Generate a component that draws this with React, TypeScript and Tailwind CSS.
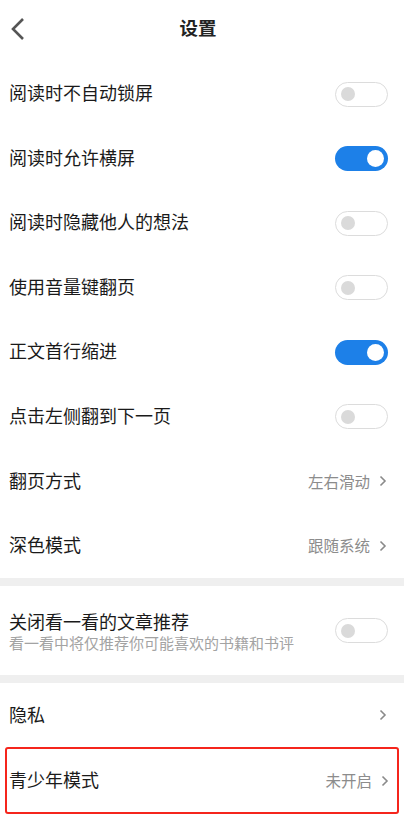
import clsx from "clsx";

const font = "font-['Noto_Sans_CJK_SC','Noto_Sans',sans-serif]";

function Toggle({ on }: { on: boolean }) {
  return (
    <div
      className={clsx(
        "flex h-[25px] w-[53px] shrink-0 items-center rounded-full px-[4px]",
        on
          ? "justify-end bg-[#1d80e8]"
          : "justify-start border-[1.5px] border-[#dcdcdc] bg-white px-[5px]"
      )}
    >
      <div
        className={clsx(
          "rounded-full",
          on ? "h-[17px] w-[17px] bg-white" : "h-[14px] w-[14px] bg-[#dadada]"
        )}
      />
    </div>
  );
}

function Chevron() {
  return (
    <svg width="8" height="12" viewBox="0 0 8 12" className="ml-[9px]">
      <path
        d="M1.5 1.5 L6 6 L1.5 10.5"
        fill="none"
        stroke="#8a8a8a"
        strokeWidth="1.6"
      />
    </svg>
  );
}

function ToggleRow({ label, on }: { label: string; on: boolean }) {
  return (
    <div className="flex h-[64.5px] items-center justify-between pl-[9px] pr-[16px]">
      <span className="mb-[3px] text-[18px] text-[#1a1a1a]">{label}</span>
      <Toggle on={on} />
    </div>
  );
}

function LinkRow({ label, value }: { label: string; value?: string }) {
  return (
    <div className="flex h-[64.5px] items-center justify-between pl-[9px] pr-[17px]">
      <span className="mb-[2px] text-[18px] text-[#1a1a1a]">{label}</span>
      <div className="flex items-center">
        {value && (
          <span className="text-[15.5px] text-[#8c8c8c]">{value}</span>
        )}
        <Chevron />
      </div>
    </div>
  );
}

export default function App() {
  return (
    <div className={clsx("h-[821px] w-[404px] overflow-hidden bg-white", font)}>
      <header className="relative flex h-[62px] items-center justify-center pr-[8px]">
        <svg
          width="16"
          height="24"
          viewBox="0 0 16 24"
          className="absolute left-[10px] top-[17px]"
        >
          <path
            d="M13 2 L3 12 L13 22"
            fill="none"
            stroke="#555"
            strokeWidth="2.6"
          />
        </svg>
        <h1 className="mb-[6px] text-[18.5px] font-bold text-[#222]">设置</h1>
      </header>

      <ToggleRow label="阅读时不自动锁屏" on={false} />
      <ToggleRow label="阅读时允许横屏" on />
      <ToggleRow label="阅读时隐藏他人的想法" on={false} />
      <ToggleRow label="使用音量键翻页" on={false} />
      <ToggleRow label="正文首行缩进" on />
      <ToggleRow label="点击左侧翻到下一页" on={false} />
      <LinkRow label="翻页方式" value="左右滑动" />
      <LinkRow label="深色模式" value="跟随系统" />

      <div className="h-[8px] bg-[#efefef]" />

      <div className="flex h-[89px] items-center justify-between pl-[9px] pr-[16px]">
        <div className="flex flex-col">
          <span className="text-[18px] leading-[24px] text-[#1a1a1a]">
            关闭看一看的文章推荐
          </span>
          <span className="text-[15px] leading-[20px] text-[#a3a3a3]">
            看一看中将仅推荐你可能喜欢的书籍和书评
          </span>
        </div>
        <Toggle on={false} />
      </div>

      <div className="h-[8px] bg-[#efefef]" />

      <div className="h-[64px]">
        <LinkRow label="隐私" />
      </div>
      <div className="mx-[5px] rounded-[3px] border-[2.5px] border-[#f5251c]">
        <div className="flex h-[63px] items-center justify-between pl-[2px] pr-[8px]">
          <span className="mb-[2px] text-[18px] text-[#1a1a1a]">青少年模式</span>
          <div className="flex items-center">
            <span className="text-[15.5px] text-[#8c8c8c]">未开启</span>
            <Chevron />
          </div>
        </div>
      </div>
    </div>
  );
}
